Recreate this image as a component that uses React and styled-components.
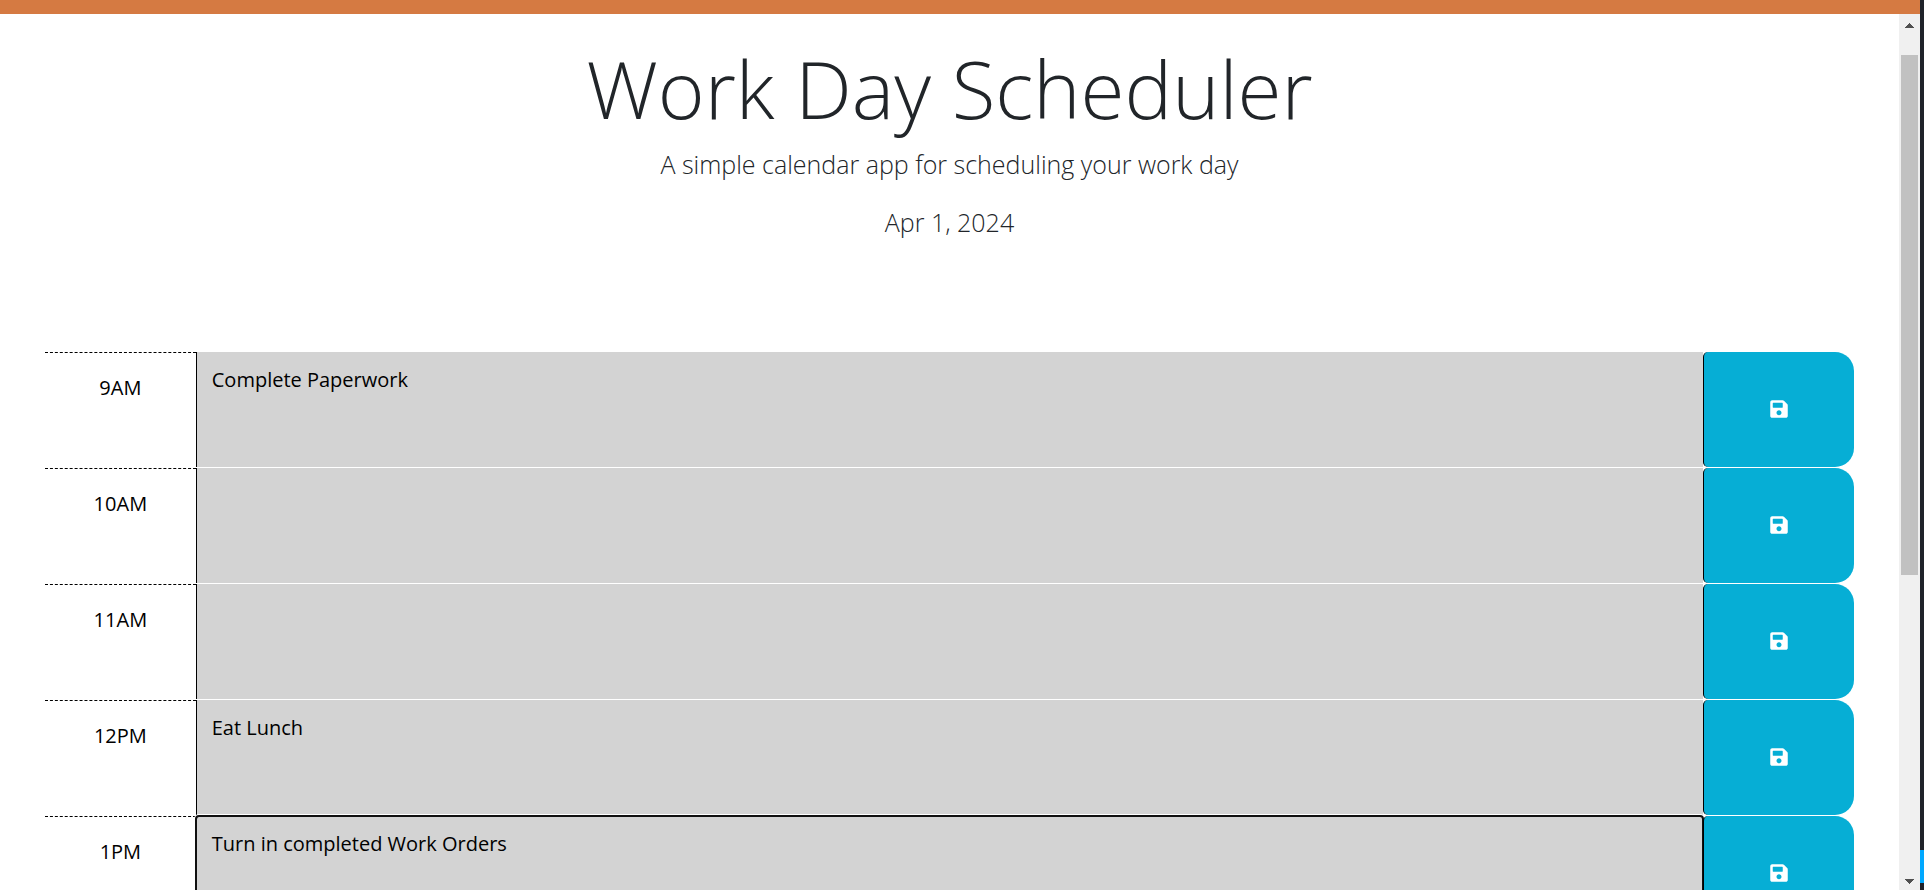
import React, { useState } from "react";
import styled, { createGlobalStyle } from "styled-components";
import { FaSave } from "react-icons/fa";

const GlobalStyle = createGlobalStyle`
  *, *::before, *::after { box-sizing: border-box; }
  body {
    margin: 0;
    background: #fff;
    color: #212529;
    font-family: "Open Sans", sans-serif;
    font-size: 20px;
    line-height: 30px;
  }
`;

const Desktop = styled.div`
  display: flex;
  height: 100vh;
  overflow: hidden;
`;

const BrowserWindow = styled.div`
  flex: 1;
  min-width: 0;
  display: flex;
  flex-direction: column;
`;

const AccentBar = styled.div`
  flex: none;
  height: 14px;
  background: #d57a42;
`;

const Viewport = styled.div`
  flex: 1;
  min-height: 0;
  display: flex;
`;

const Page = styled.div`
  flex: 1;
  min-width: 0;
  overflow: hidden;
`;

const Header = styled.header`
  padding: 26px 20px 111px;
  text-align: center;
`;

const Title = styled.h1`
  margin: 0 0 9px;
  font-size: 80px;
  font-weight: 300;
  line-height: 96px;
`;

const Lead = styled.p`
  margin: 0 0 20px;
  font-size: 25px;
  font-weight: 300;
  line-height: 38px;

  &:last-child { margin-bottom: 0; }
`;

const Schedule = styled.main`
  display: grid;
  gap: 1px;
  padding: 0 45px;
`;

const TimeBlock = styled.div`
  display: grid;
  grid-template-columns: 1fr 10fr 1fr;
  height: 115px;
`;

const Hour = styled.label`
  padding-top: 20px;
  border-top: 1px dashed #000;
  color: #000;
  text-align: center;
`;

const Task = styled.textarea`
  display: block;
  width: 100%;
  height: 100%;
  margin: 0;
  padding: 13px 15px;
  border: 0;
  border-left: 1px solid #000;
  border-radius: ${({ $active }) => ($active ? "3px" : "0")};
  outline: ${({ $active }) => ($active ? "2px solid #101010" : "none")};
  outline-offset: -1px;
  box-shadow: ${({ $active }) => ($active ? "0 0 0 2px #fff" : "none")};
  background: #d3d3d3;
  color: #000;
  font: inherit;
  resize: none;
`;

const SaveButton = styled.button`
  display: flex;
  align-items: center;
  justify-content: center;
  padding: 0 0 1px;
  border: 0;
  border-left: 1px solid #000;
  border-radius: 5px 19px 19px 5px;
  background: #06aed5;
  color: #fff;
  font-size: 20px;
  cursor: pointer;
`;

const Scrollbar = styled.div`
  flex: none;
  width: 21px;
  display: flex;
  flex-direction: column;
  align-items: center;
  background: #f0f0f0;
`;

const Arrow = styled.svg`
  flex: none;
  width: 9px;
  height: 5px;
  margin: ${({ $down }) => ($down ? "0 0 6px" : "9px 0 27px")};
  fill: #505050;
`;

const Track = styled.div`
  flex: 1;
  width: 17px;
`;

const Thumb = styled.div`
  height: 63.1%;
  background: #c1c1c1;
`;

const Edge = styled.div`
  flex: none;
  width: 4px;
  display: flex;
  flex-direction: column;
  justify-content: flex-end;
  padding-bottom: 7px;
  background: #20232a;
`;

const EdgeHighlight = styled.div`
  height: 33px;
  background: #00a8ff;
`;

const initialBlocks = [
  { hour: "9AM", task: "Complete Paperwork" },
  { hour: "10AM", task: "" },
  { hour: "11AM", task: "" },
  { hour: "12PM", task: "Eat Lunch" },
  { hour: "1PM", task: "Turn in completed Work Orders" },
];

export default function App() {
  const [blocks, setBlocks] = useState(initialBlocks);
  const [active, setActive] = useState("1PM");

  const edit = (hour, task) =>
    setBlocks((all) => all.map((b) => (b.hour === hour ? { ...b, task } : b)));

  return (
    <>
      <GlobalStyle />
      <Desktop>
        <BrowserWindow>
          <AccentBar />
          <Viewport>
            <Page>
              <Header>
                <Title>Work Day Scheduler</Title>
                <Lead>A simple calendar app for scheduling your work day</Lead>
                <Lead>Apr 1, 2024</Lead>
              </Header>
              <Schedule>
                {blocks.map(({ hour, task }) => (
                  <TimeBlock key={hour}>
                    <Hour htmlFor={`task-${hour}`}>{hour}</Hour>
                    <Task
                      id={`task-${hour}`}
                      value={task}
                      spellCheck={false}
                      $active={hour === active}
                      onFocus={() => setActive(hour)}
                      onChange={(e) => edit(hour, e.target.value)}
                    />
                    <SaveButton type="button" aria-label={`Save ${hour}`}>
                      <FaSave aria-hidden="true" />
                    </SaveButton>
                  </TimeBlock>
                ))}
              </Schedule>
            </Page>
            <Scrollbar aria-hidden="true">
              <Arrow viewBox="0 0 9 5">
                <path d="M4 0h1v1h1v1h1v1h1v1h1v1H0V4h1V3h1V2h1V1h1z" />
              </Arrow>
              <Track>
                <Thumb />
              </Track>
              <Arrow $down viewBox="0 0 9 5">
                <path d="M0 0h9v1H8v1H7v1H6v1H5v1H4V4H3V3H2V2H1V1H0z" />
              </Arrow>
            </Scrollbar>
          </Viewport>
        </BrowserWindow>
        <Edge>
          <EdgeHighlight />
        </Edge>
      </Desktop>
    </>
  );
}
